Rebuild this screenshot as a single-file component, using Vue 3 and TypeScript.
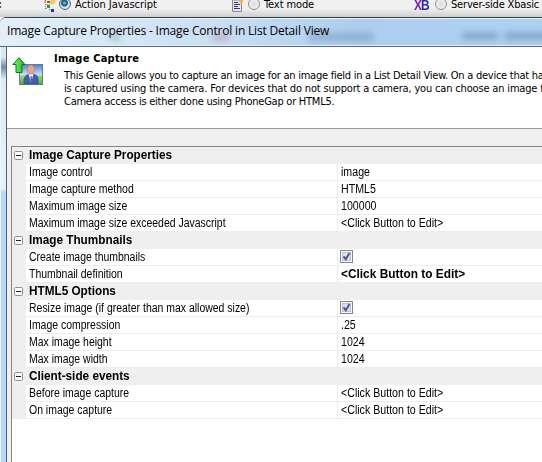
<script setup lang="ts">
interface Row { label: string; value?: string; header?: boolean; checked?: boolean; bold?: boolean }

const rows: Row[] = [
  { label: 'Image Capture Properties', header: true },
  { label: 'Image control', value: 'image' },
  { label: 'Image capture method', value: 'HTML5' },
  { label: 'Maximum image size', value: '100000' },
  { label: 'Maximum image size exceeded Javascript', value: '<Click Button to Edit>' },
  { label: 'Image Thumbnails', header: true },
  { label: 'Create image thumbnails', checked: true },
  { label: 'Thumbnail definition', value: '<Click Button to Edit>', bold: true },
  { label: 'HTML5 Options', header: true },
  { label: 'Resize image (if greater than max allowed size)', checked: true },
  { label: 'Image compression', value: '.25' },
  { label: 'Max image height', value: '1024' },
  { label: 'Max image width', value: '1024' },
  { label: 'Client-side events', header: true },
  { label: 'Before image capture', value: '<Click Button to Edit>' },
  { label: 'On image capture', value: '<Click Button to Edit>' },
]
</script>

<template>
  <div class="screen">
    <div class="toolbar">
      <span class="colon">:</span>
      <div class="option first">
        <svg class="ico" width="14" height="13" viewBox="0 0 14 13">
          <path d="M2.500 0v9M2.500 4.500h3M2.500 8.500h2M6.500 5v5h2" fill="none" stroke="#777" stroke-dasharray="1 1" />
          <path d="M8 0h4l1 2-2 2-3 1-2-2z" fill="#f6c765" />
          <path d="M4 1h3v2H4z" fill="#e33a2e" /><path d="M4 5h3v3H4z" fill="#1fa53a" />
          <path d="M1 1h2v2H1z" fill="#f29a2c" /><path d="M8 9h3v3H8z" fill="#2334c8" />
        </svg>
        <span class="radio on"></span><span class="t1">Action Javascript</span>
      </div>
      <div class="option second">
        <svg class="ico" width="12" height="12" viewBox="0 0 12 12">
          <path d="M.5 0h9v11.500H.5z" fill="#e3e4f0" stroke="#8b8b99" />
          <path d="M2 2.500h4M2 4.500h6M2 6.500h4M2 8.500h6" stroke="#39397a" />
          <path d="M7 0h4v2L9 4 7 2z" fill="#efb745" />
        </svg>
        <span class="radio"></span><span class="t2">Text mode</span>
      </div>
      <div class="option third">
        <span class="xb"><span class="x">X</span>B</span>
        <span class="radio"></span><span class="t3">Server-side Xbasic</span>
      </div>
    </div>
    <div class="window">
      <div class="titlebar">
        <span class="smudge s1"></span><span class="smudge s2"></span>
        <span class="smudge s3"></span><span class="smudge s4"></span><span class="smudge s5"></span>
        <span class="title">Image Capture Properties - Image Control in List Detail View</span>
      </div>
      <div class="body">
        <div class="edge"></div>
        <div class="client">
          <header class="intro">
            <svg class="picture" width="32" height="29" viewBox="0 0 32 29">
              <defs>
                <linearGradient id="sky" x1="0" y1="0" x2="0" y2="1">
                  <stop offset="0" stop-color="#4f80d8" /><stop offset=".5" stop-color="#c2def7" />
                  <stop offset=".6" stop-color="#9ad462" /><stop offset="1" stop-color="#5da43a" />
                </linearGradient>
                <linearGradient id="arrow"><stop offset="0" stop-color="#7dff6e" /><stop offset="1" stop-color="#14b51d" /></linearGradient>
              </defs>
              <rect x="7.500" y="7.500" width="23" height="20" fill="url(#sky)" stroke="#5f7f96" />
              <path d="M12 27v-5q1-4 5-5h4q5 1 5 5v5z" fill="#4060ae" stroke="#2a478c" stroke-width=".6" />
              <path d="M16.500 17l2.500 9 2.500-9z" fill="#e6eefc" /><path d="M18.500 19h1l1 6-1 2-1-2z" fill="#47659f" />
              <ellipse cx="19" cy="12.500" rx="3.800" ry="4.500" fill="#e5a58a" stroke="#b0705a" stroke-width=".5" />
              <path d="M7 .7L.8 7.500H4v8h6v-8h3z" fill="url(#arrow)" stroke="#127018" />
            </svg>
            <div>
              <h1>Image Capture</h1>
              <p>
                <span class="line">This Genie allows you to capture an image for an image field in a List Detail View. On a device that has</span>
                <span class="line loose">is captured using the camera. For devices that do not support a camera, you can choose an image from</span>
                <span class="line">Camera access is either done using PhoneGap or HTML5.</span>
              </p>
            </div>
          </header>
          <div class="grid">
            <div v-for="(row, i) in rows" :key="i" class="row" :class="{ head: row.header }">
              <div class="gutter">
                <svg v-if="row.header" width="9" height="9" viewBox="0 0 9 9">
                  <rect x=".5" y=".5" width="8" height="8" rx="1" fill="#fafafa" stroke="#919191" /><path d="M2 4.500h5" stroke="#222" />
                </svg>
              </div>
              <div class="label"><span class="narrow">{{ row.label }}</span></div>
              <div v-if="!row.header" class="value" :class="{ bold: row.bold }">
                <svg v-if="row.checked" class="check" width="13" height="13" viewBox="0 0 13 13">
                  <rect x=".5" y=".5" width="12" height="12" fill="#f8f8f8" stroke="#858585" />
                  <rect x="2.500" y="2.500" width="8" height="8" fill="#dde2ea" stroke="#bcc3ce" />
                  <path d="M3.500 6.300l2.300 3L9.500 3" fill="none" stroke="#43579d" stroke-width="1.900" />
                </svg>
                <span v-else class="narrow">{{ row.value }}</span>
              </div>
            </div>
          </div>
        </div>
      </div>
    </div>
  </div>
</template>

<style>
body { overflow: hidden; }
</style>

<style scoped>
* { box-sizing: border-box; }
.screen { width: 542px; height: 462px; overflow: hidden; display: flex; flex-direction: column; background: #fff; color: #000; white-space: nowrap; }
.toolbar { height: 17px; flex: none; display: flex; background: linear-gradient(#f0f0f0 50%, #cfcfcf); font: 11px/13px "DejaVu Sans Condensed", "DejaVu Sans", sans-serif; font-stretch: condensed; }
.colon { width: 43px; line-height: 9px; margin-left: -2px; color: #802040; font-weight: bold; }
.option { display: flex; height: 13px; line-height: 9px; }
.first { width: 191px; }
.second { width: 181px; }
.ico { flex: none; margin-right: 4px; }
.first .ico { margin: 0 2px 0 2px; }
.radio { flex: none; width: 12px; height: 12px; margin: -2px 4px 0 0; border: 1px solid #8b8f94; border-radius: 50%; background: radial-gradient(circle, #ddd, #f8f8f8); }
.radio.on { border-color: #41647f; background: radial-gradient(circle at 45% 40%, #65d2f4 0, #164c77 35%, #d9e5ed 50%); }
.t1 { letter-spacing: -.05px; }
.t2 { letter-spacing: -.1px; }
.t3 { letter-spacing: -.18px; }
.xb { width: 22px; margin-left: 1px; margin-right: -1px; font: bold 14px/10px "Liberation Sans", sans-serif; letter-spacing: -1px; color: #2b2b9f; transform: scaleX(.85); transform-origin: 0 0; }
.x { color: #7c20c4; }
.window { flex: 1; border-top: 1px solid #303b43; border-top-left-radius: 6px; background: #bcd7f2; display: flex; flex-direction: column; overflow: hidden; }
.titlebar { height: 28px; flex: none; position: relative; overflow: hidden; border-top: 1px solid #e9f7ff; border-bottom: 1px solid #d9edfb; background: linear-gradient(90deg, #e4effa, #cadff4 40%, #aeceef 65%, #add0f1); }
.title { position: relative; display: block; padding: 3px 0 0 7px; font: 12px/17px "Open Sans", sans-serif; letter-spacing: -.19px; }
.smudge { position: absolute; top: 14px; height: 8px; border-radius: 4px; background: #42658a; opacity: .3; filter: blur(3px); }
.s1 { left: 110px; width: 10px; background: #398a46; }
.s2 { left: 212px; width: 18px; background: #a85b70; }
.s3 { left: 308px; width: 66px; }
.s4 { left: 462px; width: 36px; opacity: .45; height: 6px; }
.s5 { left: 504px; width: 45px; opacity: .45; height: 6px; }
.body { flex: 1; display: flex; border-top: 1px solid #596b7c; }
.edge { width: 7px; flex: none; border-left: 1px solid #edf7ff; border-right: 1px solid #51616e; background: linear-gradient(#d8e7f7 0 10px, #758aa9 20px, #dcebfa 32px, #e5f1fd 142px, #b4d8fb 145px); }
.client { flex: 1; min-width: 0; background: #f0f0f0; display: flex; flex-direction: column; }
.intro { height: 82px; flex: none; display: flex; background: #fff; border-bottom: 1px solid #9b9b9b; font: 11px/13px "DejaVu Sans Condensed", "DejaVu Sans", sans-serif; font-stretch: condensed; overflow: hidden; }
.picture { flex: none; margin: 10px 10px 0 5px; }
h1 { margin: 5px 0 0; font: bold 11px/13px "DejaVu Sans Condensed", "DejaVu Sans", sans-serif; font-stretch: condensed; letter-spacing: .22px; }
p { margin: 4px 0 0 10px; letter-spacing: -.25px; }
.line { display: block; }
.loose { letter-spacing: -.17px; }
.grid { flex: 1; margin: 17px 0 0 4px; border: solid #858585; border-width: 1px 0 0 1px; background: #fff; }
.row { display: flex; height: 17px; font: 12px/16px "Liberation Sans", Arial, sans-serif; }
.narrow { display: inline-block; transform: scaleX(.872); transform-origin: 0 50%; }
.gutter { width: 14px; flex: none; background: #efefef; padding: 4px 0 0 2px; line-height: 0; }
.label { width: 312px; flex: none; padding-left: 3px; border-bottom: 1px solid #ededed; border-right: 1px solid #ededed; }
.value { flex: 1; padding-left: 3px; border-bottom: 1px solid #ededed; }
.value .narrow { transform: scaleX(.886); }
.head { background: #efefef; font-weight: bold; }
.head .label { border-color: transparent; }
.head .narrow { transform: scaleX(.98); }
.bold { font-weight: bold; }
.bold .narrow { transform: scaleX(.99); }
.check { display: block; margin: 1px 0 0 -1px; }
</style>
